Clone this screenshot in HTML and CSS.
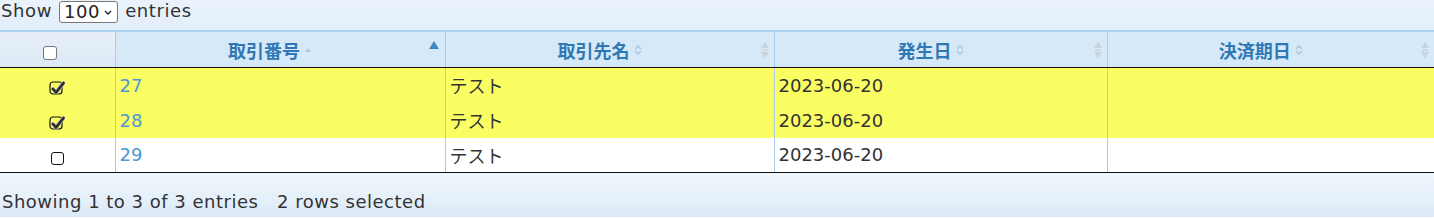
FILE: index.html
```html
<!DOCTYPE html>
<html lang="ja">
<head>
<meta charset="utf-8">
<link rel="stylesheet" href="styles.css">
</head>
<body>
<div class="wrap">
  <div class="length">
    <span>Show</span>
    <span class="select">100<svg class="chev" viewBox="0 0 8 5" width="8" height="5"><path d="M1 1 L4 4 L7 1" fill="none" stroke="#222" stroke-width="1.4"/></svg></span>
    <span>entries</span>
  </div>
  <table class="grid">
    <colgroup>
      <col class="c0"><col class="c1"><col class="c2"><col class="c3"><col class="c4">
    </colgroup>
    <thead>
      <tr>
        <th class="chkcol"><span class="box"></span></th>
        <th class="sorted"><span class="lbl">取引番号<svg class="mini" viewBox="0 0 8 6" width="8" height="6"><path d="M4 1 L7 5 L1 5 Z" fill="#a9cbe6"/></svg></span>
          <svg class="edge up" viewBox="0 0 10 8" width="10" height="8"><path d="M5 0 L10 8 L0 8 Z" fill="#3f88c5"/></svg></th>
        <th><span class="lbl">取引先名<svg class="mini" viewBox="0 0 8 12" width="8" height="12"><path d="M1 5 L4 2 L7 5" fill="none" stroke="#a9cbe6" stroke-width="1.6"/><path d="M1 7 L4 10 L7 7" fill="none" stroke="#a9cbe6" stroke-width="1.6"/></svg></span>
          <svg class="edge both" viewBox="0 0 10 18" width="10" height="18"><path d="M5 1 L9 7 L1 7 Z M5 17 L9 11 L1 11 Z" fill="#c9d3dc"/><rect x="2" y="8.3" width="6" height="1.4" fill="#c9d3dc"/></svg></th>
        <th><span class="lbl">発生日<svg class="mini" viewBox="0 0 8 12" width="8" height="12"><path d="M1 5 L4 2 L7 5" fill="none" stroke="#a9cbe6" stroke-width="1.6"/><path d="M1 7 L4 10 L7 7" fill="none" stroke="#a9cbe6" stroke-width="1.6"/></svg></span>
          <svg class="edge both" viewBox="0 0 10 18" width="10" height="18"><path d="M5 1 L9 7 L1 7 Z M5 17 L9 11 L1 11 Z" fill="#c9d3dc"/><rect x="2" y="8.3" width="6" height="1.4" fill="#c9d3dc"/></svg></th>
        <th><span class="lbl">決済期日<svg class="mini" viewBox="0 0 8 12" width="8" height="12"><path d="M1 5 L4 2 L7 5" fill="none" stroke="#a9cbe6" stroke-width="1.6"/><path d="M1 7 L4 10 L7 7" fill="none" stroke="#a9cbe6" stroke-width="1.6"/></svg></span>
          <svg class="edge both" viewBox="0 0 10 18" width="10" height="18"><path d="M5 1 L9 7 L1 7 Z M5 17 L9 11 L1 11 Z" fill="#c9d3dc"/><rect x="2" y="8.3" width="6" height="1.4" fill="#c9d3dc"/></svg></th>
      </tr>
    </thead>
    <tbody>
      <tr class="sel">
        <td class="chkcol"><svg class="check" viewBox="0 0 16 16" width="16" height="16"><rect x="1" y="2" width="12" height="12" rx="3" fill="none" stroke="#111" stroke-width="1.2"/><path d="M4 9 L7 12.5 L14.5 3" fill="none" stroke="#bbb" stroke-width="4" stroke-linecap="round" stroke-linejoin="round"/><path d="M4 9 L7 12.5 L14.5 3" fill="none" stroke="#2b2b2b" stroke-width="2.6" stroke-linecap="round" stroke-linejoin="round"/></svg></td>
        <td class="num">27</td><td>テスト</td><td>2023-06-20</td><td></td>
      </tr>
      <tr class="sel">
        <td class="chkcol"><svg class="check" viewBox="0 0 16 16" width="16" height="16"><rect x="1" y="2" width="12" height="12" rx="3" fill="none" stroke="#111" stroke-width="1.2"/><path d="M4 9 L7 12.5 L14.5 3" fill="none" stroke="#bbb" stroke-width="4" stroke-linecap="round" stroke-linejoin="round"/><path d="M4 9 L7 12.5 L14.5 3" fill="none" stroke="#2b2b2b" stroke-width="2.6" stroke-linecap="round" stroke-linejoin="round"/></svg></td>
        <td class="num">28</td><td>テスト</td><td>2023-06-20</td><td></td>
      </tr>
      <tr>
        <td class="chkcol"><span class="box plain"></span></td>
        <td class="num">29</td><td>テスト</td><td>2023-06-20</td><td></td>
      </tr>
    </tbody>
  </table>
  <div class="info">Showing 1 to 3 of 3 entries&nbsp;&nbsp;&nbsp;2 rows selected</div>
</div>
</body>
</html>
```
FILE: styles.css
```css
html, body {
  margin: 0;
  padding: 0;
  background: #ffffff;
}
.wrap {
  width: 1434px;
  font-family: "DejaVu Sans", "Noto Sans CJK JP", sans-serif;
  color: #333;
}
.length {
  height: 30px;
  display: flex;
  align-items: flex-start;
  gap: 7px;
  padding-left: 1px;
  font-size: 18px;
  letter-spacing: 0.6px;
  line-height: 22px;
  color: #333;
  background: linear-gradient(#eaf3fb, #e2eef9);
}
.select {
  display: inline-flex;
  align-items: center;
  gap: 4px;
  height: 20px;
  margin-top: 1px;
  padding: 0 5px 0 4px;
  border: 1px solid #777;
  border-radius: 3px;
  background: #fff;
  font-size: 18px;
  line-height: 20px;
  color: #222;
}
.grid {
  width: 1434px;
  border-collapse: collapse;
  table-layout: fixed;
}
.c0 { width: 115px; }
.c1 { width: 330px; }
.c2 { width: 329px; }
.c3 { width: 333px; }
.c4 { width: 327px; }
thead th {
  position: relative;
  height: 35px;
  padding: 0 20px 0 0;
  background: #d6e9f8;
  border-top: 2px solid #abd0ec;
  border-bottom: 1px solid #111;
  border-left: 1px solid #a8cdeb;
  color: #2f78b3;
  font-family: "Noto Sans CJK JP", sans-serif;
  font-size: 18px;
  font-weight: bold;
  text-align: center;
}
thead th:first-child { border-left: none; }
thead th.chkcol {
  padding-right: 14px;
  background: linear-gradient(#e7f0f9, #dde9f6);
}
.lbl {
  display: inline-flex;
  align-items: center;
  gap: 4px;
}
.edge {
  position: absolute;
  right: 6px;
  top: 50%;
}
.edge.up { transform: translateY(-9px); }
.edge.both { transform: translateY(-9px); right: 4px; }
.box {
  display: inline-block;
  width: 12px;
  height: 12px;
  border: 1px solid #777;
  border-radius: 3px;
  background: #fff;
  vertical-align: middle;
}
.box.plain {
  width: 11px;
  height: 11px;
  border-color: #111;
  border-radius: 3px;
  margin-top: 4px;
}
tbody td {
  height: 35px;
  padding: 0 0 0 4px;
  border-left: 1px solid #a8cdeb;
  font-size: 18px;
  color: #333;
  background: #fff;
  vertical-align: middle;
  box-sizing: border-box;
}
tbody td:first-child { border-left: none; }
tbody tr.sel td { background: #fafe63; }
tbody tr:last-child td { border-bottom: 1px solid #111; }
td.chkcol { text-align: center; padding: 0; }
td.num { color: #4b98d3; }
.check { vertical-align: middle; margin-top: 3px; }
.info {
  height: 44px;
  padding-left: 2px;
  display: flex;
  align-items: flex-end;
  padding-bottom: 5px;
  box-sizing: border-box;
  font-size: 18px;
  letter-spacing: 0.5px;
  color: #333;
  background: linear-gradient(#f0f7fc, #dceaf7);
}
```
